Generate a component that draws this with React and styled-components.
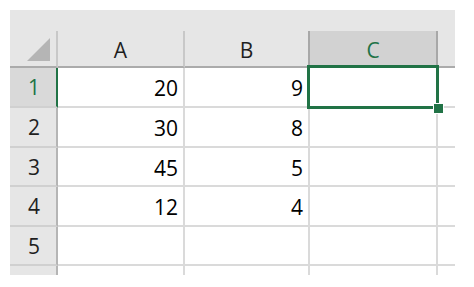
import React from "react";
import styled, { createGlobalStyle, css } from "styled-components";

const GREEN = "#217346";

const GlobalStyle = createGlobalStyle`
  * { box-sizing: border-box; }
  body {
    margin: 0;
    background: #ffffff;
    font-family: "Open Sans", "Liberation Sans", sans-serif;
  }
`;

const Page = styled.div`
  padding: 10px 0 0 10px;
`;

const Sheet = styled.div`
  width: 445px;
  height: 265px;
  overflow: hidden;
  background: #e6e6e6;
`;

const TopStrip = styled.div`
  height: 21px;
  background: #e6e6e6;
`;

const Grid = styled.div`
  display: grid;
  grid-template-columns: 48px 127px 125px 128px 60px;
  grid-template-rows: 37px 40px 40px 39px 40px 39px 40px;
  background: #ffffff;
`;

const Corner = styled.div`
  background: #e6e6e6;
  border-right: 2px solid #c8c8c8;
  border-bottom: 2px solid #ababab;
  display: flex;
  align-items: flex-end;
  justify-content: flex-end;
  padding: 0 6px 5px 0;
`;

const Triangle = styled.div`
  width: 23px;
  height: 23px;
  background: #b5b5b5;
  clip-path: polygon(100% 0, 100% 100%, 0 100%);
`;

const ColHead = styled.div`
  display: flex;
  align-items: center;
  justify-content: center;
  font-size: 21px;
  color: #1f1f1f;
  background: #e6e6e6;
  border-right: 2px solid #c8c8c8;
  border-bottom: 2px solid #ababab;
  padding-top: 2px;
  ${({ $active }) =>
    $active &&
    css`
      background: #d2d2d2;
      color: ${GREEN};
      border-right-color: #a8a8a8;
      border-left: 2px solid #a8a8a8;
      margin-left: -2px;
    `}
`;

const RowHead = styled.div`
  display: flex;
  align-items: center;
  justify-content: center;
  font-size: 21px;
  color: #1f1f1f;
  background: #e6e6e6;
  border-right: 2px solid #b5b5b5;
  border-bottom: 2px solid #d0d0d0;
  padding-left: 2px;
  ${({ $active }) =>
    $active &&
    css`
      background: #d9d9d9;
      color: ${GREEN};
      border-right-color: ${GREEN};
    `}
`;

const Cell = styled.div`
  position: relative;
  display: flex;
  align-items: center;
  justify-content: flex-end;
  padding: 2px 5px 0 0;
  font-size: 21px;
  color: #000000;
  border-right: 2px solid #dadada;
  border-bottom: 2px solid #dadada;
`;

const Selection = styled.div`
  position: absolute;
  left: -3px;
  top: -3px;
  right: -3px;
  bottom: -3px;
  border: 3px solid ${GREEN};
  z-index: 2;
`;

const FillHandle = styled.div`
  position: absolute;
  right: -7px;
  bottom: -7px;
  width: 9px;
  height: 9px;
  background: ${GREEN};
  outline: 1px solid #ffffff;
`;

const columns = ["A", "B", "C", "D"];
const rows = [
  [20, 9, ""],
  [30, 8, ""],
  [45, 5, ""],
  [12, 4, ""],
  ["", "", ""],
  ["", "", ""],
];

export default function App() {
  return (
    <Page>
      <GlobalStyle />
      <Sheet>
        <TopStrip />
        <Grid>
          <Corner>
            <Triangle />
          </Corner>
          {columns.map((c) => (
            <ColHead key={c} $active={c === "C"}>
              {c === "D" ? "" : c}
            </ColHead>
          ))}
          {rows.map((r, i) => (
            <React.Fragment key={i}>
              {/* the 6th row is cut off before its number shows */}
              <RowHead $active={i === 0}>{i < 5 ? i + 1 : ""}</RowHead>
              {r.map((v, j) => (
                <Cell key={j}>
                  {v}
                  {i === 0 && j === 2 && (
                    <Selection>
                      <FillHandle />
                    </Selection>
                  )}
                </Cell>
              ))}
              <Cell />
            </React.Fragment>
          ))}
        </Grid>
      </Sheet>
    </Page>
  );
}
